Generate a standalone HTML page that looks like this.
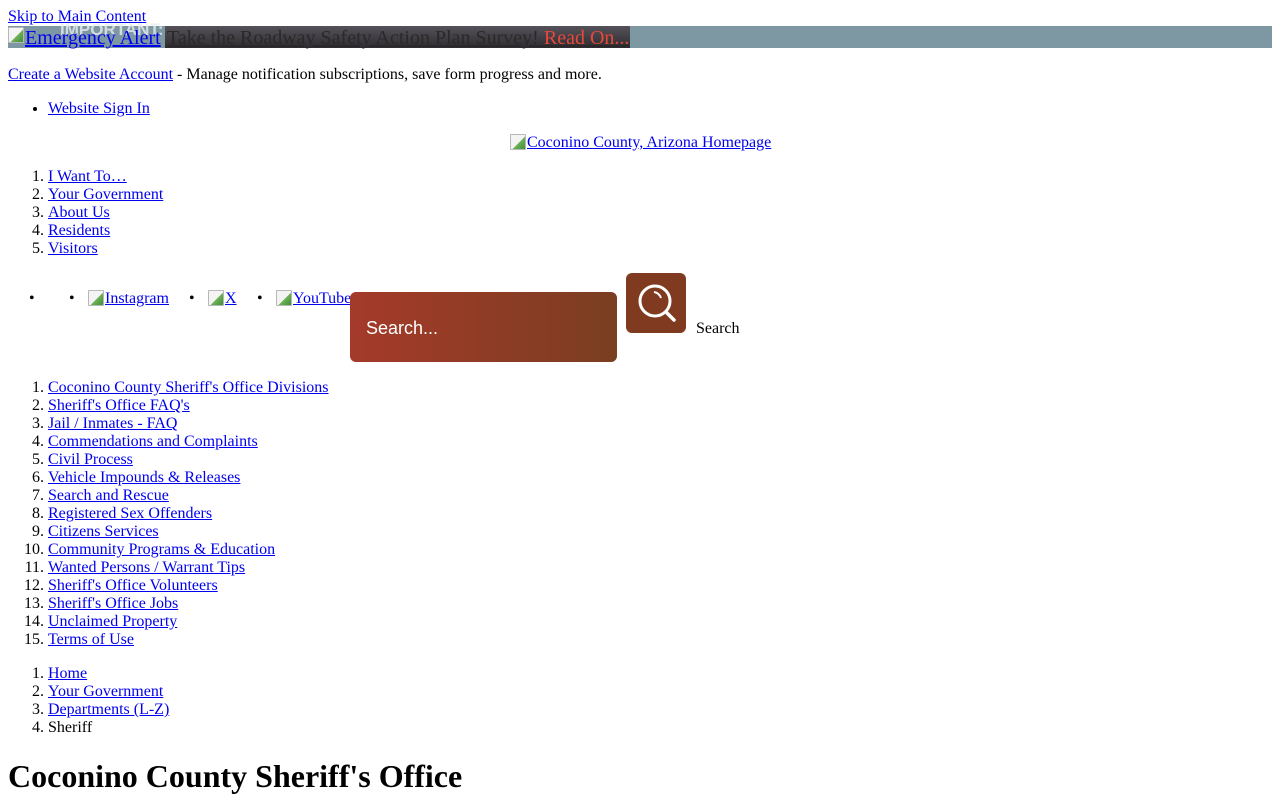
<!DOCTYPE html>
<html><head><meta charset="utf-8"><style>
body{margin:0;font-family:"Liberation Serif",serif;font-size:16px;line-height:18px;color:#000;background:#fff;width:1280px;height:800px;overflow:hidden;position:relative}
a{color:#00e;text-decoration:underline}
.a{position:absolute;white-space:nowrap}
ol,ul{margin:0;padding:0 0 0 40px}
li{height:18px}
.bi{display:inline-block;width:14px;height:14px;border:1px solid #b8b8b8;border-radius:1px;background:linear-gradient(135deg,#f4f4f4 55%,#6fb255 56%,#3f8f3a);vertical-align:text-top;margin-right:1px}
</style></head><body>
<div class="a" style="left:8px;top:8px"><a href="#">Skip to Main Content</a></div>
<div class="a" style="left:8px;top:26px;width:1264px;height:22px;background:#7d98a3"></div>
<div class="a" style="left:60px;top:20px;font:bold 17px 'Liberation Sans',sans-serif;color:#e8eef0;opacity:.8">IMPORTANT:</div>
<div class="a" style="left:8px;top:27px;font-size:20px;line-height:22px"><a href="#"><span class="bi"></span>Emergency Alert</a></div>
<div class="a" style="left:165px;top:26px;width:465px;height:22px;background:linear-gradient(#55525a,#2e2c30)"></div>
<div class="a" style="left:167px;top:27px;font-size:20px;line-height:22px;color:#2a2828;text-decoration:underline">Take the Roadway Safety Action Plan Survey! <span style="color:#e8483a;text-decoration:none">Read On...</span></div>
<div class="a" style="left:8px;top:66px"><a href="#">Create a Website Account</a> - Manage notification subscriptions, save form progress and more.</div>
<ul class="a" style="left:8px;top:100px"><li><a href="#">Website Sign In</a></li></ul>
<div class="a" style="left:510px;top:134px"><a href="#"><span class="bi"></span>Coconino County, Arizona Homepage</a></div>
<ol class="a" style="left:8px;top:168px"><li><a href="#">I Want To…</a></li><li><a href="#">Your Government</a></li><li><a href="#">About Us</a></li><li><a href="#">Residents</a></li><li><a href="#">Visitors</a></li></ol>
<div class="a" style="left:29px;top:290px">•</div>
<div class="a" style="left:69px;top:290px">•</div><div class="a" style="left:88px;top:290px"><a href="#"><span class="bi"></span>Instagram</a></div>
<div class="a" style="left:189px;top:290px">•</div><div class="a" style="left:208px;top:290px"><a href="#"><span class="bi"></span>X</a></div>
<div class="a" style="left:257px;top:290px">•</div><div class="a" style="left:276px;top:290px"><a href="#"><span class="bi"></span>YouTube</a></div>
<div class="a" style="left:350px;top:292px;width:267px;height:70px;border-radius:6px;background:linear-gradient(90deg,#a53a2a,#7a3e20)"></div>
<div class="a" style="left:366px;top:318px;font:18px 'Liberation Sans Narrow','Liberation Sans',sans-serif;color:#fff">Search...</div>
<div class="a" style="left:626px;top:273px;width:60px;height:60px;border-radius:6px;background:#7f3a1f"></div>
<svg class="a" style="left:626px;top:273px" width="60" height="60"><circle cx="29" cy="28" r="15" fill="none" stroke="#fff" stroke-width="3"/><path d="M40 39 L48 47" stroke="#fff" stroke-width="3.5" stroke-linecap="round"/><path d="M28 19 A9 9 0 0 1 35 25" fill="none" stroke="#fff" stroke-width="2"/></svg>
<div class="a" style="left:696px;top:320px">Search</div>
<ol class="a" style="left:8px;top:379px"><li><a href="#">Coconino County Sheriff's Office Divisions</a></li><li><a href="#">Sheriff's Office FAQ's</a></li><li><a href="#">Jail / Inmates - FAQ</a></li><li><a href="#">Commendations and Complaints</a></li><li><a href="#">Civil Process</a></li><li><a href="#">Vehicle Impounds &amp; Releases</a></li><li><a href="#">Search and Rescue</a></li><li><a href="#">Registered Sex Offenders</a></li><li><a href="#">Citizens Services</a></li><li><a href="#">Community Programs &amp; Education</a></li><li><a href="#">Wanted Persons / Warrant Tips</a></li><li><a href="#">Sheriff's Office Volunteers</a></li><li><a href="#">Sheriff's Office Jobs</a></li><li><a href="#">Unclaimed Property</a></li><li><a href="#">Terms of Use</a></li></ol>
<ol class="a" style="left:8px;top:665px"><li><a href="#">Home</a></li><li><a href="#">Your Government</a></li><li><a href="#">Departments (L-Z)</a></li><li>Sheriff</li></ol>
<div class="a" style="left:8px;top:758px;font-size:32px;line-height:37px;font-weight:bold">Coconino County Sheriff's Office</div>
</body></html>
